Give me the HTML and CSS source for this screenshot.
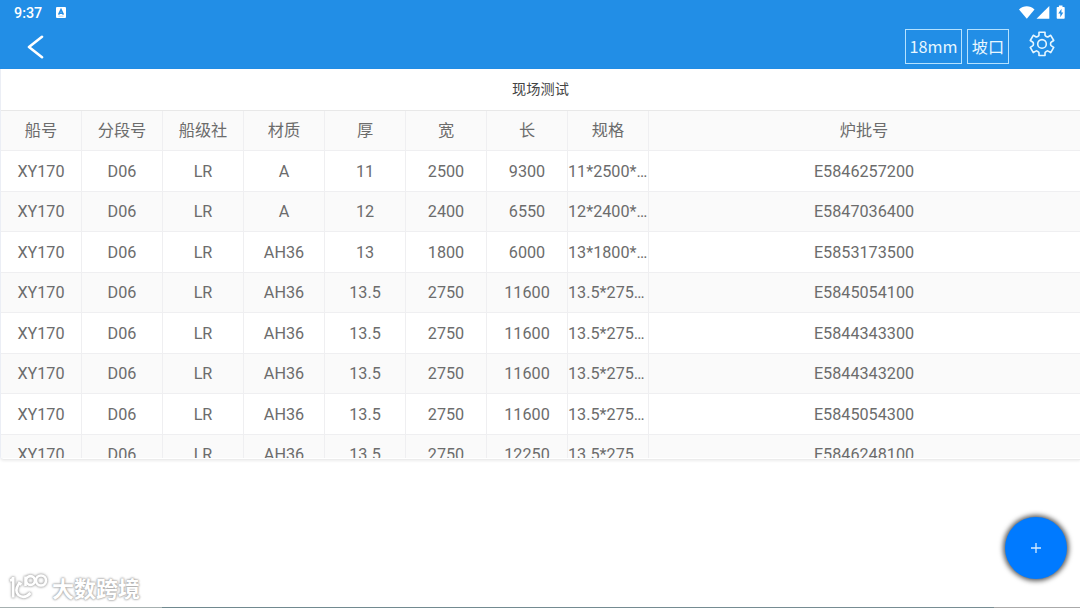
FILE: index.html
```html
<!DOCTYPE html>
<html lang="zh-CN">
<head>
	<meta charset="utf-8">
	<title>现场测试</title>
	<link rel="stylesheet" href="styles.css">
</head>
<body>
	<header class="header">
		<div class="status">
			<span class="time">9:37</span>
			<svg class="app-icon" width="11" height="11" viewBox="0 0 11 11"><rect width="10" height="11" rx="1" fill="#fff"/><path d="M2.6 7.6L5 2.6l2.400 5M3.500 6.200h3" fill="none" stroke="#228ee6" stroke-width="1.500"/><path d="M2.500 9.200h5" stroke="#8fc4f1" stroke-width=".7"/></svg>
			<svg class="signals" width="48" height="16" viewBox="0 0 48 16" fill="#fff">
				<path d="M0 4.400C4.500 .3 11 .3 15.500 4.400L7.800 13.700z"/>
				<path d="M17.500 13.700L30.300 1v12.700z"/>
				<path d="M39.900 0.600h3.600v1.300h1.500q.7 0 .7.800v10.200q0 .8-.7.800h-6.600q-.7 0-.7-.8V2.700q0-.8.7-.8h1.500z"/>
				<path d="M42.500 3.800l-3.200 4.700h2v3.700l3-4.800h-1.900z" fill="#228ee6"/>
			</svg>
		</div>
		<div class="nav">
			<svg class="back" width="18" height="24" viewBox="0 0 18 24"><path d="M15 1.800L2 12l13 10.200" fill="none" stroke="#fff" stroke-width="2.600" stroke-linecap="round" stroke-linejoin="round"/></svg>
			<div class="tools">
				<button class="tag tag-size">18mm</button>
				<button class="tag tag-edge">坡口</button>
				<svg class="gear" width="28" height="28" viewBox="0 0 26 26" fill="none" stroke="#e8f7ff" stroke-width="1.500" stroke-linejoin="round">
					<path d="M10.200 1.200h5.600v2.600q.1.700.8 1l.9.500q.7.400 1.300 0l2.300-1.300 2.800 4.800-2.200 1.400q-.7.400-.7 1.100v1.400q0 .7.700 1.100l2.200 1.400-2.800 4.800-2.300-1.300q-.6-.4-1.300 0l-.9.500q-.7.300-.8 1v2.600h-5.600v-2.600q-.1-.7-.8-1l-.9-.5q-.7-.4-1.300 0L4.900 20 2.100 15.200l2.200-1.400q.7-.4.700-1.100v-1.400q0-.7-.7-1.100L2.100 8.800 4.900 4l2.300 1.300q.6.400 1.300 0l.9-.5q.7-.3.800-1z"/>
					<circle cx="13" cy="12" r="4"/>
				</svg>
			</div>
		</div>
	</header>
	<main class="card">
		<h1 class="title">现场测试</h1>
		<div class="table" id="table">
			<div class="row">
				<div class="cell">船号</div>
				<div class="cell">分段号</div>
				<div class="cell">船级社</div>
				<div class="cell">材质</div>
				<div class="cell">厚</div>
				<div class="cell">宽</div>
				<div class="cell">长</div>
				<div class="cell">规格</div>
				<div class="cell">炉批号</div>
			</div>
		</div>
	</main>
	<button class="add" aria-label="+">
		<svg width="12" height="12" viewBox="0 0 12 12"><path d="M6 1v10M1 6h10" stroke="#d5ecff" stroke-width="1.300"/></svg>
	</button>
	<div class="watermark">
		<svg class="mark" width="42" height="32" viewBox="0 0 42 32">
			<path d="M2 8.500q3.200-.5 3.200-3.500v20.500M11 11.500q-5 7.500-.5 11.500 6 4.500 12-2M10 10.500l3.500 2M17.500 4.500V14"/>
			<circle cx="22.500" cy="8.500" r="4.400"/>
			<circle cx="33" cy="8.500" r="5"/>
		</svg>
		<span>大数跨境</span>
	</div>
	<div class="edge"></div>
<script>
var rows = [
	['A', '11', '2500', '9300', '11*2500*9300', 'E5846257200'],
	['A', '12', '2400', '6550', '12*2400*6550', 'E5847036400'],
	['AH36', '13', '1800', '6000', '13*1800*6000', 'E5853173500'],
	['AH36', '13.5', '2750', '11600', '13.5*2750*11600', 'E5845054100'],
	['AH36', '13.5', '2750', '11600', '13.5*2750*11600', 'E5844343300'],
	['AH36', '13.5', '2750', '11600', '13.5*2750*11600', 'E5844343200'],
	['AH36', '13.5', '2750', '11600', '13.5*2750*11600', 'E5845054300'],
	['AH36', '13.5', '2750', '12250', '13.5*2750*12250', 'E5846248100']
];
var table = document.getElementById('table');
for (var i = 0; i < rows.length; i++) {
	var row = document.createElement('div');
	row.className = 'row';
	// 船号、分段号、船级社 are the same for the whole list
	var cells = ['XY170', 'D06', 'LR'].concat(rows[i]);
	for (var j = 0; j < cells.length; j++) {
		var cell = document.createElement('div');
		cell.className = 'cell';
		cell.textContent = cells[j];
		row.appendChild(cell);
	}
	table.appendChild(row);
}
</script>
</body>
</html>
```
FILE: styles.css
```css
* {
	box-sizing: border-box;
}
body {
	margin: 0;
	height: 608px;
	overflow: hidden;
	background: #fff;
	font-family: Roboto, "Noto Sans CJK SC", sans-serif;
}
button {
	padding: 0;
	border: 0;
	font-family: inherit;
}
.header {
	height: 69px;
	background: #228ee6;
	color: #fff;
}
.status {
	display: flex;
	height: 26px;
	padding: 5px 13px 0 14px;
}
.time {
	width: 42px;
	font-size: 14.3px;
	font-weight: 500;
	line-height: 16px;
}
.app-icon {
	margin-top: 2px;
}
.signals {
	margin-left: auto;
}
.nav {
	display: flex;
	justify-content: space-between;
	padding: 3px 24px 0 27px;
}
.back {
	margin-top: 6px;
}
.tools {
	display: flex;
}
.tag {
	height: 35px;
	border: 1px solid #b5e2ff;
	background: none;
	color: #e8f7ff;
	font-family: "Noto Sans CJK SC", sans-serif;
	font-size: 16.2px;
	line-height: 33px;
}
.tag-size {
	width: 57px;
	margin-right: 5px;
}
.tag-edge {
	width: 42px;
	margin-right: 19px;
}
.gear {
	margin-top: 2px;
}
.card {
	height: 391px;
	overflow: hidden;
	border-left: 1px solid #ebeef5;
	border-radius: 0 0 0 4px;
	border-bottom: 1px solid #ececec;
	box-shadow: 0 1px 3px rgba(0, 0, 0, .08);
}
.title {
	height: 41px;
	margin: 0;
	color: #444;
	font-size: 14.2px;
	font-weight: normal;
	line-height: 41px;
	text-align: center;
}
.table {
	height: 348px;
	overflow: hidden;
	border-top: 1px solid #e8e8e8;
}
.row {
	display: grid;
	grid-template-columns: repeat(8, 81px) 1fr;
	height: 40.5px;
	line-height: 41px;
}
.row:first-child {
	height: 40px;
}
.row:nth-child(odd) {
	background: #fafafa;
	line-height: 40px;
}
.cell {
	overflow: hidden;
	border-right: 1px solid #efeff1;
	border-bottom: 1px solid #efeff1;
	color: #6c6c6c;
	font-size: 16.2px;
	text-align: center;
	text-overflow: ellipsis;
	white-space: nowrap;
}
.cell:last-child {
	padding-right: 1px;
	border-right: 0;
}
.add {
	position: absolute;
	left: 1005px;
	top: 517px;
	display: flex;
	align-items: center;
	justify-content: center;
	width: 62px;
	height: 62px;
	border-radius: 50%;
	background: #007aff;
	box-shadow: 0 0 5px 2px rgba(0, 0, 0, .65);
}
.watermark {
	position: absolute;
	left: 8px;
	top: 572px;
	display: flex;
	color: #fff;
	font-family: "Noto Sans CJK SC", sans-serif;
	font-size: 22px;
	font-weight: 700;
	line-height: 32px;
	text-shadow: 0 0 2px #aaa, 0 0 2px #aaa, 0 0 3px #bbb;
}
.watermark span {
	margin-left: 2px;
	margin-top: -1px;
}
.mark {
	overflow: visible;
	fill: none;
	stroke: #fff;
	stroke-width: 2.6;
	filter: drop-shadow(0 0 1px #aaa) drop-shadow(0 0 1px #bbb);
}
.edge {
	position: absolute;
	left: 0;
	right: 0;
	bottom: 0;
	height: 1px;
	background: linear-gradient(90deg, #a6b0b0 15%, #70898f 15%, #788d93 92%, #aaa 92%);
}
```
